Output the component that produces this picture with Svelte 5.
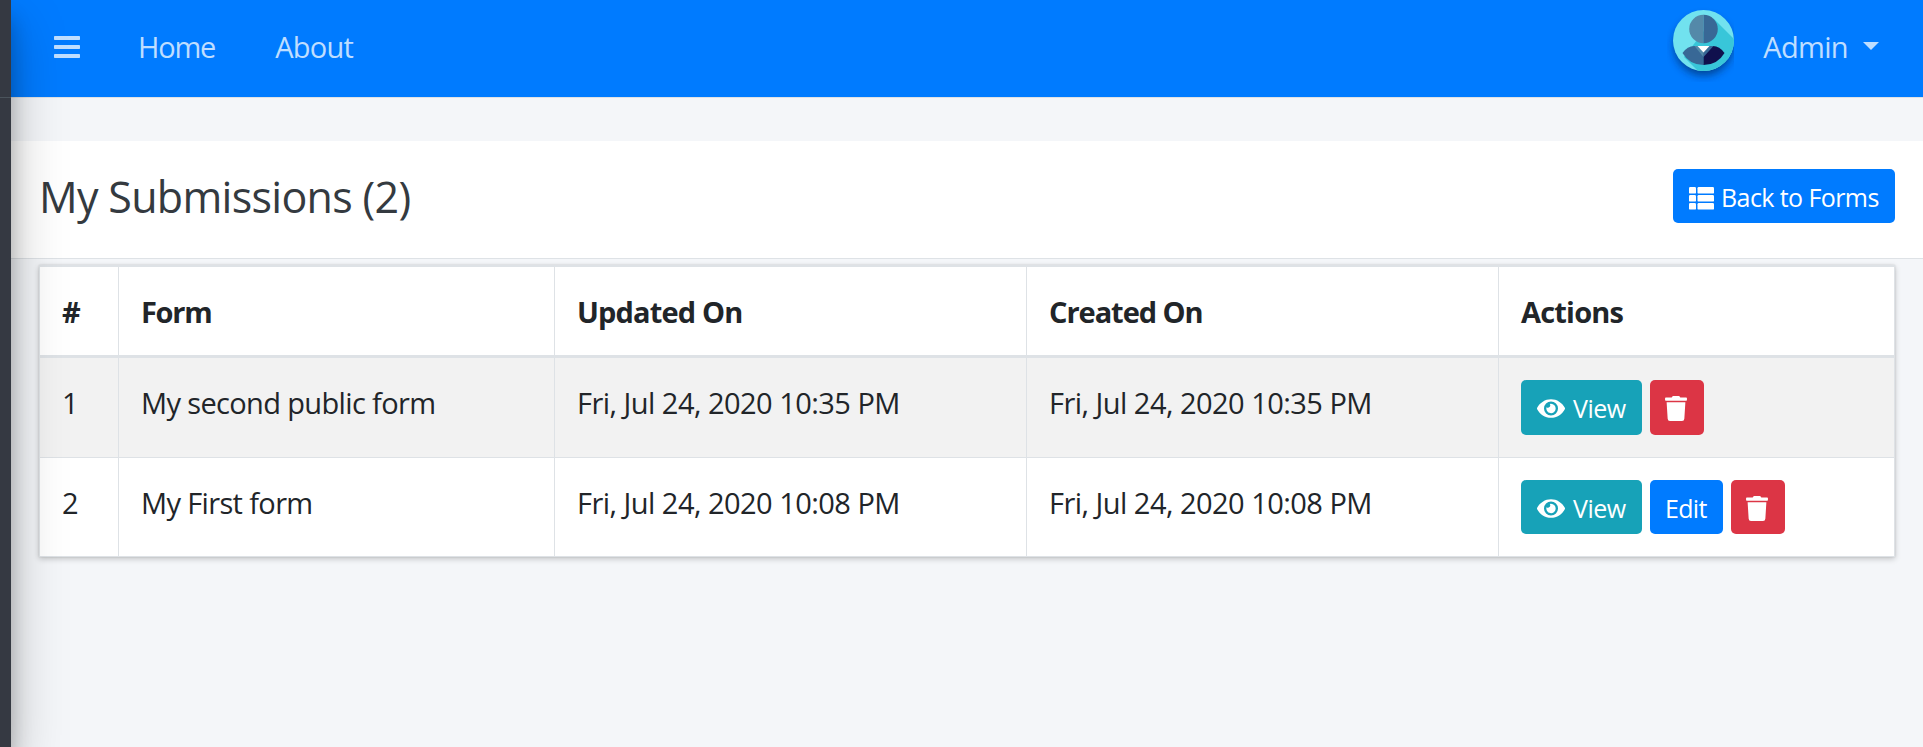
<script>
  const columns = [
    { label: '#', width: 78, spacing: 0 },
    { label: 'Form', width: 436, spacing: -1.3 },
    { label: 'Updated On', width: 472, spacing: -0.85 },
    { label: 'Created On', width: 472, spacing: -1.05 },
    { label: 'Actions', width: 396, spacing: -0.8 }
  ];
  const submissions = [
    { id: 1, form: 'My second public form', date: 'Fri, Jul 24, 2020 10:35 PM', editable: false },
    { id: 2, form: 'My First form', date: 'Fri, Jul 24, 2020 10:08 PM', editable: true }
  ];
</script>

<div class="app">
  <aside class="sidebar"><div class="brand"></div></aside>
  <div class="page">
    <nav class="navbar">
      <svg class="bars" width="26" height="22" viewBox="0 0 26 22" aria-hidden="true">
        <rect width="26" height="4" rx=".7" /><rect y="9" width="26" height="4" rx=".7" /><rect y="18" width="26" height="4" rx=".7" />
      </svg>
      <span class="home">Home</span>
      <span class="about">About</span>
      <svg class="avatar" width="67" height="78" viewBox="0 0 67 78" aria-hidden="true">
        <defs>
          <filter id="soft" x="-40%" y="-40%" width="180%" height="180%"><feGaussianBlur stdDeviation="4.5" /></filter>
          <clipPath id="disc"><circle cx="36.5" cy="36.5" r="30.5" /></clipPath>
        </defs>
        <circle cx="36.5" cy="42" r="29.5" fill="#002455" opacity=".62" filter="url(#soft)" />
        <g clip-path="url(#disc)">
          <rect width="67" height="78" fill="#71e2ef" />
          <path d="M46.5 14.5L80 48V80H44L17 53Z" fill="#38c6d9" />
          <path d="M36.5 10.7a14.3 14.3 0 0 0 0 28.6z" fill="#5489a9" />
          <path d="M36.5 10.7a14.3 14.3 0 0 1 0 28.6z" fill="#386896" />
          <path d="M15.500 49Q20.500 42 27 42H36.500V61Q22.500 61 15.500 49z" fill="#386896" />
          <path d="M57.500 49Q52.500 42 46 42H36.500V61Q50.500 61 57.500 49z" fill="#10104d" />
          <path d="M36.500 42H46.500L36.500 53z" fill="#386896" />
          <path d="M27.500 42H36.500V53z" fill="#5489a9" />
          <path d="M30.500 42H42.500L36.500 48.500z" fill="#fff" />
        </g>
      </svg>
      <span class="user">Admin</span>
      <span class="caret"></span>
    </nav>

    <header class="title-bar">
      <h1>My Submissions (2)</h1>
      <button class="btn primary back">
        <svg width="25" height="23" viewBox="0 0 25 23" aria-hidden="true">
          {#each [0, 8, 16] as y}
            <rect {y} width="7" height="6.6" rx="1.2" /><rect x="8.5" {y} width="16.5" height="6.6" rx="1.2" />
          {/each}
        </svg>
        <span>Back to Forms</span>
      </button>
    </header>

    <table>
      <colgroup>{#each columns as c}<col style="width: {c.width}px" />{/each}</colgroup>
      <thead>
        <tr>{#each columns as c}<th style="letter-spacing: {c.spacing}px">{c.label}</th>{/each}</tr>
      </thead>
      <tbody>
        {#each submissions as s}
          <tr>
            <td>{s.id}</td>
            <td class="form">{s.form}</td>
            <td class="date">{s.date}</td>
            <td class="date">{s.date}</td>
            <td>
              <div class="actions">
                <button class="btn info">
                  <svg width="28" height="25" viewBox="0 0 576 512" aria-hidden="true"><path d="M572.52 241.4C518.29 135.59 410.93 64 288 64S57.68 135.64 3.48 241.41a32.35 32.35 0 0 0 0 29.19C57.71 376.41 165.07 448 288 448s230.32-71.64 284.52-177.41a32.35 32.35 0 0 0 0-29.19zM288 400a144 144 0 1 1 144-144 143.93 143.93 0 0 1-144 144zm0-240a95.31 95.31 0 0 0-25.31 3.79 47.85 47.85 0 0 1-66.9 66.9A95.78 95.78 0 1 0 288 160z" /></svg>
                  <span>View</span>
                </button>
                {#if s.editable}<button class="btn primary edit"><span>Edit</span></button>{/if}
                <button class="btn danger" aria-label="Delete">
                  <svg width="22" height="25" viewBox="0 0 448 512" aria-hidden="true"><path d="M432 32H312l-9.400-18.700A24 24 0 0 0 281.100 0H166.800a23.720 23.720 0 0 0-21.400 13.300L136 32H16A16 16 0 0 0 0 48v32a16 16 0 0 0 16 16h416a16 16 0 0 0 16-16V48a16 16 0 0 0-16-16zM53.200 467a48 48 0 0 0 47.900 45h245.800a48 48 0 0 0 47.900-45L416 128H32z" /></svg>
                </button>
              </div>
            </td>
          </tr>
        {/each}
      </tbody>
    </table>
  </div>
</div>

<style>
  :global(body) { margin: 0; overflow: hidden; }
  .app {
    display: flex;
    height: 100vh;
    overflow: hidden;
    background: #f4f6f9;
    color: #212529;
    font: 29px/45px "Open Sans", "Noto Sans", sans-serif;
  }
  .sidebar {
    position: relative;
    z-index: 2;
    flex: none;
    width: 480px;
    margin-left: -469px;
    background: #353942;
    box-shadow: 0 26px 52px rgba(0, 0, 0, .25), 0 19px 19px rgba(0, 0, 0, .22);
  }
  .brand { height: 97px; border-bottom: 1px solid #4b545c; }
  .page { flex: 1; min-width: 0; }
  .navbar {
    display: flex;
    align-items: flex-start;
    box-sizing: border-box;
    height: 98px;
    padding: 24px 44px 0 43px;
    background: #007bff;
    border-bottom: 1px solid #dee2e6;
    color: rgba(255, 255, 255, .75);
  }
  .bars { margin-top: 12px; fill: currentColor; }
  .home { margin-left: 58px; letter-spacing: -1.2px; }
  .about { margin-left: 60px; letter-spacing: -.75px; }
  .avatar { margin: -20px 29px 0 auto; }
  .user { letter-spacing: -.65px; }
  .caret {
    margin: 18px 0 0 15px;
    border: 8px solid transparent;
    border-top-color: currentColor;
    border-bottom: 0;
  }
  .title-bar {
    display: flex;
    align-items: flex-start;
    justify-content: space-between;
    box-sizing: border-box;
    height: 118px;
    margin-top: 43px;
    padding: 28px 28px 0;
    background: #fff;
    border-bottom: 1px solid #dee2e6;
  }
  h1 {
    margin: 0;
    color: #343a40;
    font-size: 43px;
    font-weight: 400;
    line-height: 55px;
    letter-spacing: -.7px;
  }
  .btn {
    display: flex;
    align-items: flex-start;
    box-sizing: border-box;
    height: 54px;
    padding: 9px 16px 0;
    border: 0;
    border-radius: 5px;
    color: #fff;
    font: 25px/38px "Open Sans", "Noto Sans", sans-serif;
    letter-spacing: -.5px;
  }
  .btn svg { flex: none; margin-top: 7px; fill: currentColor; }
  .btn svg + span { margin-left: 8px; }
  .primary { background: #007bff; }
  .info { width: 121px; background: #17a2b8; }
  .danger { width: 54px; padding-left: 15px; background: #dc3545; }
  .edit { width: 73px; padding-left: 15px; letter-spacing: -.7px; }
  .back { width: 222px; letter-spacing: -.58px; }
  .back svg { margin-top: 8.5px; }
  .back svg + span { margin-left: 7px; }
  table {
    width: 1856px;
    margin: 6px 0 0 28px;
    table-layout: fixed;
    border: 1px solid #dee2e6;
    border-top-width: 2px;
    border-collapse: separate;
    border-spacing: 0;
    background: #fff;
    box-shadow: 0 0 2px rgba(0, 0, 0, .125), 0 2px 6px rgba(0, 0, 0, .2);
  }
  th, td {
    box-sizing: border-box;
    padding: 22px 0 0 22px;
    border-left: 1px solid #dee2e6;
    text-align: left;
    vertical-align: top;
    white-space: nowrap;
  }
  th:first-child, td:first-child { border-left: 0; }
  th { height: 91px; border-bottom: 3px solid #dee2e6; font-weight: 700; }
  td { height: 98px; }
  tbody tr:first-child td { height: 100px; border-bottom: 1px solid #dee2e6; background: #f2f2f2; }
  tbody tr:first-child .btn { height: 55px; }
  .form { letter-spacing: -.64px; }
  .date { letter-spacing: -.53px; }
  .actions { display: flex; gap: 8px; }
</style>
